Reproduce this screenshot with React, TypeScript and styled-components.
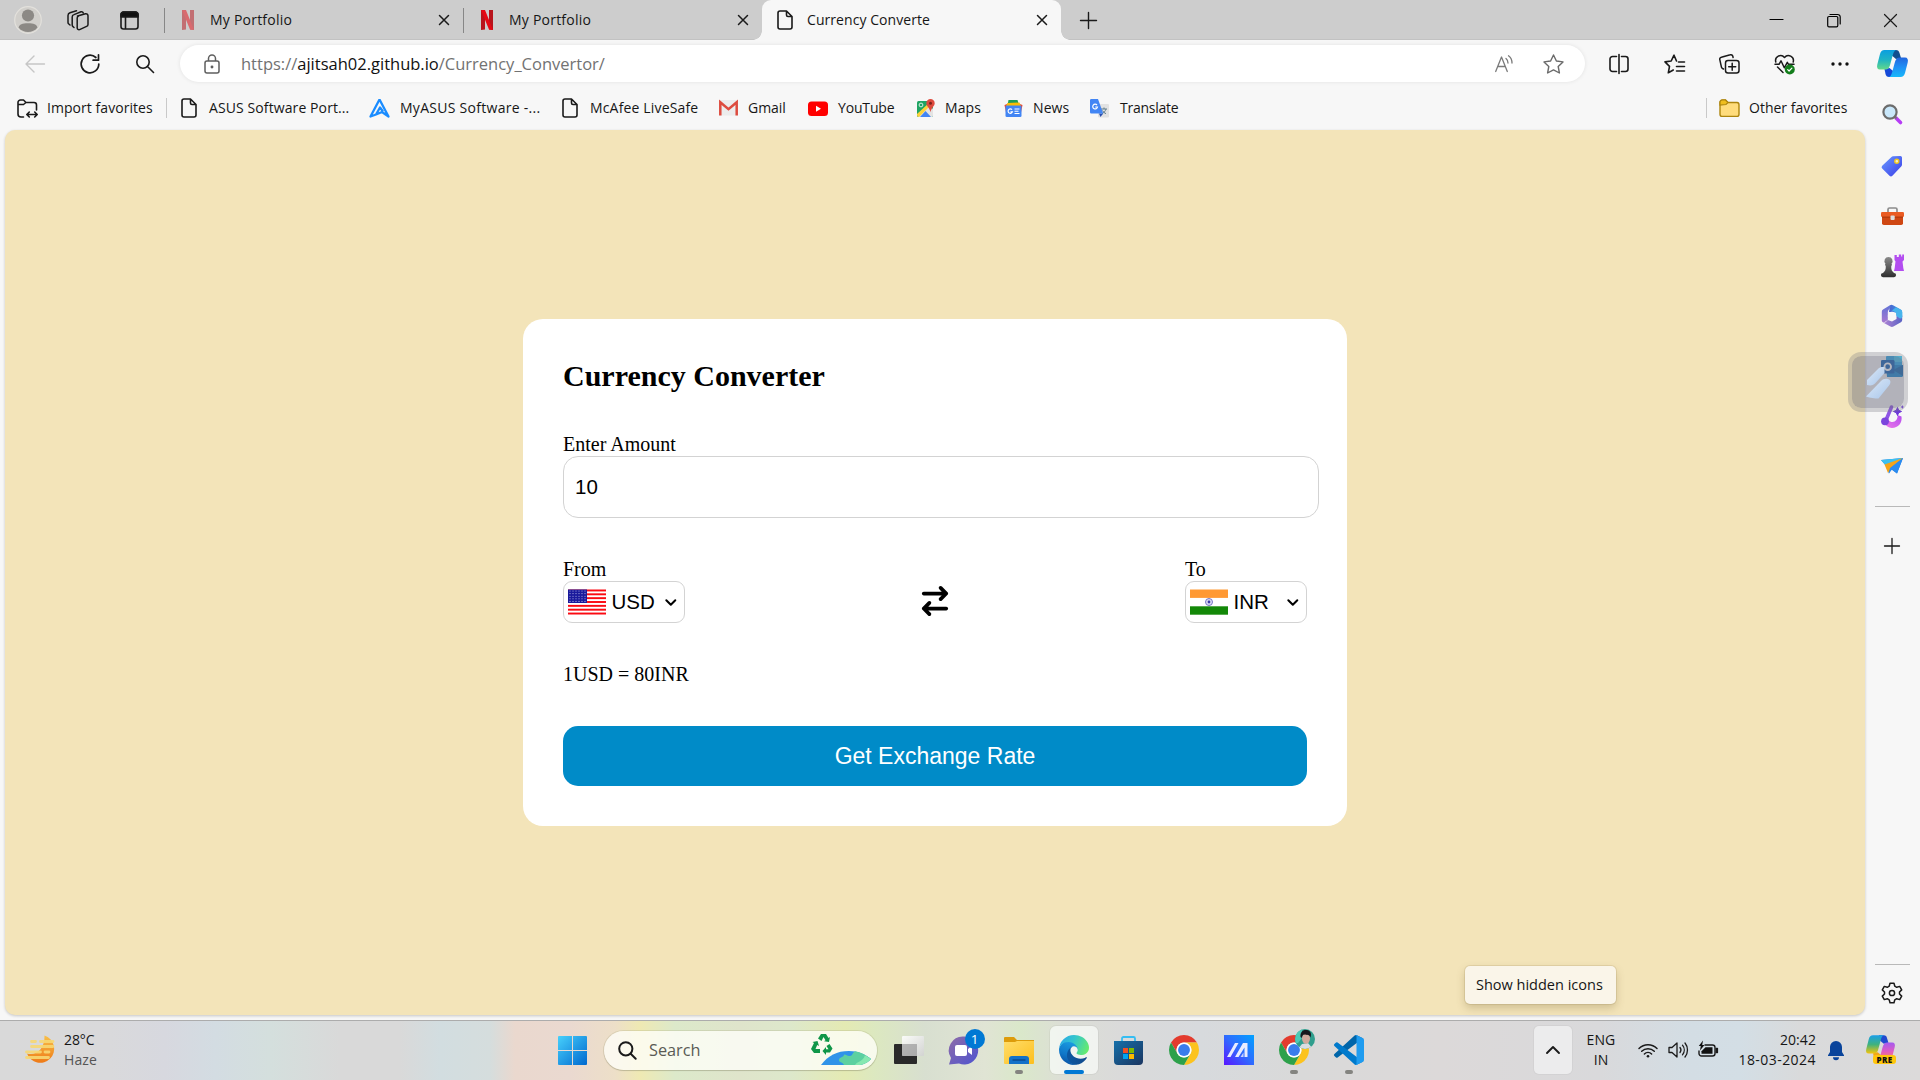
import React from "react";
import styled, { createGlobalStyle } from "styled-components";
import { FaArrowRightArrowLeft } from "react-icons/fa6";

const Global = createGlobalStyle`
  * { box-sizing: border-box; }
  html, body { margin: 0; padding: 0; overflow: hidden; }
  body { font-family: "Open Sans", "Noto Sans", sans-serif; color: #1a1a1a; }
  svg { display: block; flex: none; overflow: visible; }
`;

/* ---------- shared ---------- */

const Screen = styled.div`
  width: 1920px;
  height: 1080px;
  display: flex;
  flex-direction: column;
  background: #f7f7f7;
`;

const Label = styled.span<{ $ls?: number; $size?: number; $color?: string }>`
  font-size: ${(p) => p.$size ?? 14}px;
  letter-spacing: ${(p) => p.$ls ?? 0}px;
  color: ${(p) => p.$color ?? "#161616"};
  white-space: nowrap;
  line-height: 20px;
`;

const Cell = styled.div<{ $w: number; $ml?: number }>`
  width: ${(p) => p.$w}px;
  margin-left: ${(p) => p.$ml ?? 0}px;
  flex: none;
  display: flex;
  align-items: center;
  justify-content: center;
`;

const VLine = styled.i<{ $h: number; $color: string }>`
  width: 1px;
  height: ${(p) => p.$h}px;
  background: ${(p) => p.$color};
  flex: none;
`;

/* ---------- tab strip ---------- */

const TabStrip = styled.header`
  height: 40px;
  display: flex;
  align-items: center;
  background: #cdcdcd;
  box-shadow: inset 0 -1px 0 #c2c2c2;
  padding-left: 14px;
`;

const Tab = styled.div<{ $active?: boolean }>`
  width: 299px;
  height: 40px;
  flex: none;
  display: flex;
  align-items: center;
  padding-right: 13px;
  position: relative;
  background: ${(p) => (p.$active ? "#f7f7f7" : "transparent")};
  border-radius: 9px 9px 0 0;
  ${(p) =>
    p.$active &&
    `
    &::before, &::after {
      content: "";
      position: absolute;
      bottom: 0;
      width: 9px;
      height: 9px;
    }
    &::before { left: -9px; background: radial-gradient(circle at 0 0, transparent 8.5px, #f7f7f7 9px); }
    &::after { right: -9px; background: radial-gradient(circle at 100% 0, transparent 8.5px, #f7f7f7 9px); }
  `}
`;

const TabTitle = styled(Label)`
  margin-left: 12px;
  flex: 1;
`;

const WindowButtons = styled.div`
  margin-left: auto;
  display: flex;
  padding-right: 1px;
`;

/* ---------- toolbar ---------- */

const Toolbar = styled.nav`
  height: 48px;
  display: flex;
  align-items: center;
  padding: 0 0 1px 24px;
`;

const AddressBar = styled.div`
  width: 1405px;
  height: 37px;
  margin-left: 26px;
  border-radius: 19px;
  background: #fff;
  box-shadow: 0 0 4px rgba(0, 0, 0, 0.09);
  display: flex;
  align-items: center;
  padding-left: 21px;
`;

const Url = styled.span`
  margin-left: 19px;
  flex: 1;
  font-size: 16.5px;
  color: #727272;
  white-space: nowrap;
  b { font-weight: 400; color: #111; }
`;

/* ---------- body ---------- */

const Body = styled.div`
  height: 932px;
  display: grid;
  grid-template-columns: 1865px 55px;
`;

const Column = styled.div`
  display: flex;
  flex-direction: column;
  padding-left: 5px;
`;

const Favorites = styled.div`
  height: 42px;
  display: flex;
  align-items: center;
  padding: 0 1px 2px 12px;
`;

const Favorite = styled.div<{ $w: number; $icon: number }>`
  width: ${(p) => p.$w}px;
  flex: none;
  display: grid;
  grid-template-columns: ${(p) => p.$icon}px auto;
  justify-content: start;
  align-items: center;
`;

const Page = styled.main`
  height: 885px;
  background: #f3e4b9;
  border-radius: 10px;
  box-shadow: 0 1px 3px rgba(0, 0, 0, 0.2);
  display: flex;
  align-items: center;
  justify-content: center;
  position: relative;
`;

const Tooltip = styled.div`
  position: absolute;
  left: 1460px;
  top: 836px;
  width: 151px;
  height: 38px;
  border-radius: 5px;
  background: #faf5e9;
  box-shadow: 0 0 0 1px rgba(120, 100, 50, 0.13), 0 4px 8px rgba(100, 80, 30, 0.25);
  display: flex;
  align-items: center;
  padding-left: 11px;
`;

/* ---------- converter card ---------- */

const Card = styled.section`
  width: 824px;
  height: 507px;
  padding: 40px;
  border-radius: 20px;
  background: #fff;
  font-family: "Liberation Serif", serif;
  font-size: 20px;
  line-height: 23px;
  color: #000;
  display: flex;
  flex-direction: column;
  gap: 40px;
`;

const Title = styled.h2`
  margin: 0;
  height: 34px;
  line-height: 34px;
  font-size: 30px;
`;

const Field = styled.label`
  display: flex;
  flex-direction: column;
`;

const AmountBox = styled.div`
  width: 756px;
  height: 62px;
  border: 1px solid #d3d3d3;
  border-radius: 15px;
  padding: 0 11px;
  display: flex;
  align-items: center;
  font: 20.5px "Liberation Sans", sans-serif;
`;

const CurrencyRow = styled.div`
  display: flex;
  justify-content: space-between;
  align-items: flex-end;
`;

const SelectBox = styled.div`
  width: 122px;
  height: 42px;
  border: 1px solid #d3d3d3;
  border-radius: 9px;
  padding: 0 8px 0 4px;
  display: flex;
  align-items: center;
  font: 20.5px "Liberation Sans", sans-serif;
  span { margin-left: 5.5px; flex: 1; }
`;

const Swap = styled.div`
  height: 30px;
  margin-bottom: 7px;
  font-size: 30px;
  display: flex;
  width: 27px;
  justify-content: center;
`;

const Submit = styled.button`
  height: 60px;
  border: 0;
  padding: 0;
  border-radius: 15px;
  background: #008bc8;
  color: #fff;
  font: 23px "Liberation Sans", sans-serif;
`;

/* ---------- sidebar ---------- */

const Sidebar = styled.aside`
  display: flex;
  flex-direction: column;
  align-items: center;
  position: relative;
`;

const SideSlot = styled.div<{ $h: number }>`
  width: 53px;
  height: ${(p) => p.$h}px;
  padding-right: 1px;
  display: flex;
  align-items: center;
  justify-content: center;
`;

const HLine = styled.hr`
  width: 35px;
  height: 1px;
  border: 0;
  margin: 0;
  background: #b9b9b9;
`;

const Spring = styled.div`
  flex: 1;
`;

const Floating = styled.div`
  position: absolute;
  left: -17px;
  top: 264px;
  width: 60px;
  height: 60px;
  border-radius: 13px;
  border: 4px solid rgba(120, 120, 130, 0.3);
  background: rgba(110, 110, 125, 0.5);
  background-clip: padding-box;
  display: flex;
  align-items: center;
  justify-content: center;
  padding-left: 3px;
`;

/* ---------- taskbar ---------- */

const Taskbar = styled.footer`
  height: 60px;
  border-top: 1px solid #acacac;
  padding-bottom: 1px;
  display: flex;
  align-items: center;
  background: linear-gradient(
    90deg,
    #d9d9d9 0, #d9d9db 110px, #d7d8df 165px, #d3dce2 215px, #d4dfdd 270px, #d9d9d9 340px, #d9d9d9 400px,
    #d2dde0 440px, #d5dddd 490px, #ead8ce 515px, #ead9d0 570px, #eddfc8 615px, #efe9b3 640px, #dce9ca 675px,
    #dfe4cb 740px, #dde8cb 790px, #e4eab3 845px, #dce8c0 875px, #d8dfd0 925px, #e0e4d4 985px, #dae8ca 1020px,
    #dcdfd5 1060px, #dadada 1120px, #d7dadd 1200px, #d9d9d9 1300px, #dcd9d9 1440px, #d9d9db 1600px,
    #d3dde4 1690px, #d3dee5 1740px, #d9dadb 1800px, #dcdada 1920px
  );
`;

const Weather = styled.div`
  width: 545px;
  padding-left: 25px;
  display: flex;
  align-items: center;
`;

const Lines = styled.div<{ $ml?: number; $align?: string; $w?: number }>`
  margin-left: ${(p) => p.$ml ?? 0}px;
  width: ${(p) => (p.$w ? p.$w + "px" : "auto")};
  display: flex;
  flex-direction: column;
  align-items: ${(p) => p.$align ?? "flex-start"};
`;

const SearchBox = styled.div`
  width: 273px;
  height: 39px;
  margin: 0 4px;
  border-radius: 20px;
  background: rgba(255, 255, 250, 0.78);
  box-shadow: 0 0 0 1px rgba(150, 150, 110, 0.22), 0 1px 1px rgba(100, 100, 80, 0.25);
  display: flex;
  align-items: center;
  padding-left: 14px;
`;

const AppButton = styled.div<{ $active?: boolean }>`
  width: 48px;
  height: 48px;
  margin: 0 3.5px;
  flex: none;
  border-radius: 6px;
  display: flex;
  align-items: center;
  justify-content: center;
  position: relative;
  background: ${(p) => (p.$active ? "rgba(250,252,250,.72)" : "none")};
  box-shadow: ${(p) => (p.$active ? "0 0 0 1px rgba(0,0,0,.04)" : "none")};
`;

const Running = styled.i<{ $active?: boolean }>`
  position: absolute;
  bottom: 0;
  left: 50%;
  width: ${(p) => (p.$active ? 20 : 8)}px;
  height: 4px;
  margin-left: ${(p) => (p.$active ? -10 : -4)}px;
  border-radius: 2px;
  background: ${(p) => (p.$active ? "#0078d4" : "#848480")};
`;

const Badge = styled.span`
  position: absolute;
  right: 3px;
  top: 3px;
  width: 20px;
  height: 20px;
  border-radius: 50%;
  background: #0078d4;
  color: #fff;
  font-size: 13.5px;
  line-height: 20px;
  text-align: center;
`;

const Tray = styled.div`
  margin-left: auto;
  display: flex;
  align-items: center;
  padding-right: 24px;
`;

const TrayButton = styled.div`
  width: 38px;
  height: 48px;
  border-radius: 5px;
  background: #ececed;
  box-shadow: 0 0 0 1px rgba(0, 0, 0, 0.03);
  display: flex;
  align-items: center;
  justify-content: center;
`;

const CopilotPre = styled.div`
  position: relative;
  width: 30px;
  height: 30px;
  margin-left: 22px;
  span {
    position: absolute;
    left: 7px;
    top: 20px;
    width: 23px;
    height: 9px;
    border-radius: 3px;
    background: #ffc60b;
    color: #111;
    font-size: 8px;
    font-weight: 800;
    line-height: 9px;
    text-align: center;
    letter-spacing: 0.3px;
  }
`;

const FaceBadge = styled.i`
  position: absolute;
  right: 3px;
  top: 3px;
  width: 20px;
  height: 20px;
`;

/* ---------- icons ---------- */

type LineProps = {
  w: number;
  h: number;
  d: string;
  c?: string;
  sw?: number;
  children?: React.ReactNode;
};

const Line = ({ w, h, d, c = "#1a1a1a", sw = 1.4, children }: LineProps) => (
  <svg width={w} height={h} viewBox={`0 0 ${w} ${h}`} fill="none" stroke={c} strokeWidth={sw} strokeLinecap="round" strokeLinejoin="round">
    <path d={d} />
    {children}
  </svg>
);

const Avatar = () => (
  <svg width="28" height="28" viewBox="0 0 28 28">
    <circle cx="14" cy="14" r="13.3" fill="#d1cfcb" stroke="#e3e1dc" strokeWidth="1.2" />
    <circle cx="14" cy="9.5" r="6.1" fill="#8c8985" />
    <path d="M4.5 21.5c1-3.300 3.500-4.300 9.500-4.300s8.500 1 9.500 4.300a12.200 12.200 0 0 1-19 0z" fill="#8c8985" />
  </svg>
);

const Workspaces = () => (
  <Line w={22} h={21} sw={1.5} d="M10.500 6l8-2.200a2 2 0 0 1 2.500 1.900v8.800a2 2 0 0 1-1.400 1.900l-7 3.200a1.800 1.800 0 0 1-2.400-1.600V8a2 2 0 0 1 1.500-2M7 17.500l-1-.8a2 2 0 0 1-.8-1.700V7a2.500 2.500 0 0 1 1.800-2.400L14 1.800c1-.3 1.900.2 2.200 1M3 15l-1.200-1A2 2 0 0 1 1 12.400V5.500a3 3 0 0 1 2-2.800L9.500.8" />
);

const TabActions = () => (
  <Line w={19} h={19} sw={1.6} d="M3.500 1h12A2.500 2.500 0 0 1 18 3.500v12a2.500 2.500 0 0 1-2.500 2.500h-12A2.500 2.500 0 0 1 1 15.500v-12A2.500 2.500 0 0 1 3.500 1zM5.500 6v12">
    <path d="M1 6V3.500A2.500 2.500 0 0 1 3.500 1h12A2.500 2.500 0 0 1 18 3.500V6z" fill="#111" />
  </Line>
);

const Netflix = ({ faded }: { faded?: boolean }) => (
  <svg width="12" height="20" viewBox="0 0 12 20" opacity={faded ? 0.5 : 1}>
    <path d="M0 0h4v19.500L0 20zM8 0h4v20l-4-.5z" fill="#b8141c" />
    <path d="M0 0h4l8 20-4-.5z" fill="#e50914" />
  </svg>
);

const Doc = () => (
  <Line w={16} h={20} sw={1.6} d="M3 1h6.500L15 6.500V17a2 2 0 0 1-2 2H3a2 2 0 0 1-2-2V3a2 2 0 0 1 2-2zM9.500 1v4a1.500 1.500 0 0 0 1.500 1.500h4" />
);

const Cross = ({ s = 10, sw = 1.5 }: { s?: number; sw?: number }) => (
  <Line w={s} h={s} sw={sw} d={`M.5 .5L${s - 0.5} ${s - 0.5}M${s - 0.5} .5L.5 ${s - 0.5}`} />
);

const Copilot = ({ pre }: { pre?: boolean }) => {
  const id = pre ? "cp" : "ct";
  return (
    <svg width={pre ? 29 : 31} height={pre ? 26 : 27} viewBox="0 0 31 27">
      <defs>
        <linearGradient id={id + "a"} x1="0" y1="0" x2="0" y2="1">
          <stop offset="0" stopColor={pre ? "#1a9fe8" : "#0a9ee0"} />
          <stop offset=".5" stopColor={pre ? "#3fb27e" : "#1fb3c4"} />
          <stop offset="1" stopColor={pre ? "#f6c50a" : "#62d989"} />
        </linearGradient>
        <linearGradient id={id + "b"} x1="0" y1="0" x2="0" y2="1">
          <stop offset="0" stopColor={pre ? "#a35af0" : "#2265dd"} />
          <stop offset=".5" stopColor={pre ? "#e05cc2" : "#1e90f5"} />
          <stop offset="1" stopColor={pre ? "#ff8a4c" : "#19b8fa"} />
        </linearGradient>
      </defs>
      <path d="M14 0h5c2 0 3 1 3.500 3l1.500 5-5 1-6-5z" fill={pre ? "#2149cf" : "#12508f"} />
      <path d="M16 27h-4c-2 0-3-1-3.500-3L7.500 19l5-1 6 5z" fill={pre ? "#f3a51a" : "#1549d8"} />
      <path d="M7.500 0H20c-2.500 0-3.400 2-4.200 5l-2.600 9.500c-.8 3-2 5-5.200 5H3C.5 19.500-.5 17.500.3 14.500L3 4C3.800 1.300 5 0 7.500 0z" fill={`url(#${id}a)`} />
      <path d="M23.500 27H11c2.500 0 3.400-2 4.200-5l2.600-9.500c.8-3 2-5 5.200-5h5c2.500 0 3.500 2 2.700 5L28 23c-.8 2.700-2 4-4.500 4z" fill={`url(#${id}b)`} />
    </svg>
  );
};

const Gmail = () => (
  <svg width="19" height="16" viewBox="0 0 19 16">
    <rect x="0" y="0" width="19" height="15.5" rx="1.5" fill="#ececec" />
    <path d="M1.300 15.500V2.200l8.200 7 8.200-7v13.300" fill="none" stroke="#dd4b3e" strokeWidth="2.5" />
  </svg>
);

const YouTube = () => (
  <svg width="20" height="15" viewBox="0 0 20 15">
    <rect y=".5" width="20" height="14.500" rx="3.5" fill="#f00" />
    <path d="M8 4.800v6l5-3z" fill="#fff" />
  </svg>
);

const Maps = () => (
  <svg width="18" height="19" viewBox="0 0 18 19">
    <rect x="0" y="2" width="16" height="16" rx="1.5" fill="#1fa463" />
    <path d="M1 17.500L12 6l4 4v6.500a1.500 1.500 0 0 1-1.500 1.500h-12z" fill="#e4e4e4" />
    <path d="M0 15L13 3l2 2L2 18a2 2 0 0 1-2-2z" fill="#fdd33b" />
    <path d="M3 18l5.500-6 5.500 6z" fill="#4285f4" />
    <circle cx="4" cy="6" r="1.9" fill="none" stroke="#d9f0e2" strokeWidth="1" />
    <path d="M13.500 0a4.200 4.200 0 0 1 4.200 4.200c0 3-3.200 4-4.200 9-1-5-4.200-6-4.200-9A4.200 4.200 0 0 1 13.500 0z" fill="#dd4b3e" />
    <circle cx="13.5" cy="4.2" r="1.5" fill="#7b231c" />
  </svg>
);

const News = () => (
  <svg width="19" height="17" viewBox="0 0 19 17">
    <path d="M4.500 0h9l1.500 5H3.500z" fill="#1e9e58" />
    <path d="M.5 5l4-1.500 1 5-3.500 4zM18.500 5l-4-1.500-1 5 3.500 4z" fill="#ea4335" />
    <path d="M3.500 3l12-.5 1.500 4H2z" fill="#fbbc04" />
    <rect x="1.5" y="5.5" width="16" height="11.5" rx="1.3" fill="#4285f4" />
    <path d="M8 9.700a2.200 2.200 0 1 0 .4 2.200H6.500" stroke="#fff" strokeWidth="1.2" fill="none" />
    <path d="M10.500 9h5M10.500 11.300h4M10.500 13.500h5" stroke="#fff" strokeWidth="1.1" />
  </svg>
);

const Translate = () => (
  <svg width="19" height="19" viewBox="0 0 19 19">
    <rect x="8" y="5" width="11" height="13.5" rx="1.3" fill="#e2e2e2" />
    <path d="M11 10h6M14 8.500V10M16 10c-.5 2-2.500 4-4 5M12.500 11.500c.7 1.500 2 2.600 3.500 3.200" stroke="#607d8b" strokeWidth="1" fill="none" />
    <path d="M9 14.500h4.200L10.500 18z" fill="#2a4fae" />
    <path d="M1.300 0H8l5.200 14.500H1.300A1.300 1.300 0 0 1 0 13.200V1.300A1.300 1.300 0 0 1 1.300 0z" fill="#4285f4" />
    <path d="M7 6a2.400 2.400 0 1 0 .5 2H5.200" stroke="#fff" strokeWidth="1.2" fill="none" />
  </svg>
);

const Asus = () => (
  <svg width="21" height="20" viewBox="0 0 21 20" fill="none" stroke="#1a8cff" strokeWidth="2.3" strokeLinejoin="round">
    <path d="M10.500 1.500L1.500 18.500l5.500-2L11 9.500l3 4M10.500 1.500l9 17-6.500-4.500-6 2.500" />
  </svg>
);

const Folder = () => (
  <svg width="21" height="18" viewBox="0 0 21 18">
    <path d="M1 4a2.500 2.500 0 0 1 2.500-3h3L9 3.500h9A2.200 2.200 0 0 1 20 5.700v9.500a2.200 2.200 0 0 1-2.200 2.200H3.200A2.200 2.200 0 0 1 1 15.200z" fill="#ffdc7c" stroke="#ad850e" strokeWidth="1.4" />
    <path d="M1 6V3.200A2.200 2.200 0 0 1 3.200 1h3.300L9 3.500 7 5.500z" fill="#efbd1d" stroke="#ad850e" strokeWidth="1.2" />
  </svg>
);

const FlagUS = () => (
  <svg width="38" height="26" viewBox="0 0 38 26">
    <rect y=".5" width="38" height="25" fill="#fff" />
    {[0, 1, 2, 3, 4, 5, 6].map((i) => (
      <rect key={i} y={0.5 + i * 3.846} width="38" height="1.923" fill="#fb0a12" />
    ))}
    <rect y=".5" width="19" height="13.5" fill="#1a1a9c" />
    {[0, 1, 2, 3, 4].map((r) =>
      [0, 1, 2, 3, 4, 5].map((c) => <circle key={r + "-" + c} cx={2 + c * 3} cy={2 + r * 2.6} r=".55" fill="#b9b9e8" />)
    )}
  </svg>
);

const FlagIN = () => (
  <svg width="38" height="26" viewBox="0 0 38 26">
    <rect y=".5" width="38" height="25" fill="#fff" />
    <rect y=".5" width="38" height="8.4" fill="#ff9933" />
    <rect y="17.3" width="38" height="8.4" fill="#138808" />
    <circle cx="19" cy="13" r="3.5" fill="#dcdcf4" stroke="#6a6ac0" strokeWidth=".9" />
    <circle cx="19" cy="13" r="1.4" fill="#3a3aa8" />
  </svg>
);

const SideSearch = () => (
  <svg width="21" height="21" viewBox="0 0 21 21">
    <path d="M14 14l4.500 4.500" stroke="#b63df5" strokeWidth="3.6" strokeLinecap="round" />
    <path d="M12 12l2.500 2.500" stroke="#777" strokeWidth="2" />
    <circle cx="8" cy="8" r="6.6" fill="#c9e7fa" stroke="#6c6c6c" strokeWidth="2.2" />
  </svg>
);

const Tag = () => (
  <svg width="22" height="22" viewBox="0 0 22 22">
    <defs>
      <linearGradient id="tag" x1="0" y1="0" x2="1" y2="1">
        <stop offset="0" stopColor="#6a9cff" />
        <stop offset="1" stopColor="#3a3be8" />
      </linearGradient>
    </defs>
    <path d="M12 1.300l7.500-.3A1.700 1.700 0 0 1 21 2.500v7.300a2 2 0 0 1-.6 1.400l-9 9.500a2 2 0 0 1-2.900 0L1.200 13.500a2 2 0 0 1 0-2.800l9.300-8.800a2.500 2.500 0 0 1 1.500-.6z" fill="url(#tag)" />
    <circle cx="15.8" cy="6.2" r="2" fill="#f6f0c8" stroke="#f1c61c" strokeWidth="1.4" />
  </svg>
);

const Toolbox = () => (
  <svg width="23" height="18" viewBox="0 0 23 18">
    <path d="M7 6V2.500A1.500 1.500 0 0 1 8.500 1h6A1.500 1.500 0 0 1 16 2.500V6" fill="none" stroke="#8c8c8c" strokeWidth="1.7" />
    <rect x="1" y="6" width="21" height="12" rx="1.8" fill="#cf4713" />
    <rect x="0" y="5" width="23" height="5" rx="1.3" fill="#ea5b22" />
    <rect x="1" y="9.6" width="21" height="1" fill="#a8360b" />
    <rect x="9.5" y="8.5" width="4.2" height="4.6" rx="1" fill="#ddd" />
  </svg>
);

const Chess = () => (
  <svg width="23" height="24" viewBox="0 0 23 24">
    <defs>
      <linearGradient id="pawn" x1="0" y1="0" x2="0" y2="1">
        <stop offset="0" stopColor="#8a8a8a" />
        <stop offset="1" stopColor="#2f2f2f" />
      </linearGradient>
    </defs>
    <path d="M13.500 1h2.300v2h2V0.500h2.400v2h1V.5H23V6l-1.500 1.500.8 6.500.7 3H13l.7-3 .8-6.500L13.500 6z" fill="#b34df0" />
    <path d="M7.500 3a4 4 0 0 1 3 6.700l.5.800-.8 2c0 3 .5 4.500 2.800 6.500a2.100 2.100 0 0 1 0 4.200H2a2.100 2.100 0 0 1 0-4.200c2.300-2 2.800-3.500 2.800-6.500l-.8-2 .5-.8A4 4 0 0 1 7.500 3z" fill="url(#pawn)" />
  </svg>
);

const M365 = () => (
  <svg width="22" height="24" viewBox="0 0 22 24">
    <defs>
      <linearGradient id="m1" x1="0" y1="0" x2="1" y2="0">
        <stop offset="0" stopColor="#4a62cf" />
        <stop offset="1" stopColor="#3aa4ea" />
      </linearGradient>
      <linearGradient id="m2" x1="0" y1="0" x2="0" y2="1">
        <stop offset="0" stopColor="#6173d6" />
        <stop offset="1" stopColor="#a778d0" />
      </linearGradient>
      <linearGradient id="m3" x1="0" y1="0" x2="1" y2="0">
        <stop offset="0" stopColor="#b184d4" />
        <stop offset="1" stopColor="#5a62c4" />
      </linearGradient>
    </defs>
    <path d="M9 1.200a3 3 0 0 1 3 0l7.800 4.300A2.600 2.600 0 0 1 21.200 8v5L14.500 8.500 8 8z" fill="url(#m1)" />
    <path d="M9 1.200L2 5.500A2.600 2.600 0 0 0 .8 8v8.500c0 1.500 1.500 2.500 3 1.500l3-2V8.500c0-2 1-3 2.500-4.500V1z" fill="url(#m2)" />
    <path d="M21.200 11.500V16a2.600 2.600 0 0 1-1.300 2.300l-7.500 4.300a3 3 0 0 1-3 0L2 18.500c2 .5 3-.5 4.800-2.500l4.200 1.500 4.500-2.500V9z" fill="url(#m3)" />
    <path d="M21.200 8v4.500c0 1.800-1.400 2.500-2.700 1.700L15.300 12l-.3-3.500-4-2 4-3.200 4.800 2.600A2.600 2.600 0 0 1 21.200 8z" fill="#47b4ec" />
    <circle cx="11" cy="12" r="4.2" fill="#f7f7f7" />
  </svg>
);

const Outlook = () => (
  <svg width="22" height="21" viewBox="0 0 22 21">
    <rect x="5" y="0" width="16" height="11" rx="1" fill="#28a8ea" />
    <rect x="13" y="0" width="8" height="6" fill="#45c5ee" />
    <path d="M5 9h17v10.500a1.500 1.500 0 0 1-1.500 1.500H6z" fill="#1487d0" />
    <path d="M22 9v11L12 14z" fill="#1167b0" />
    <rect x="0" y="4" width="13.5" height="13.5" rx="1.3" fill="#0f5fb4" />
    <circle cx="6.7" cy="10.7" r="3.3" fill="none" stroke="#fff" strokeWidth="1.9" />
  </svg>
);

const Designer = () => (
  <svg width="23" height="23" viewBox="0 0 23 23">
    <defs>
      <linearGradient id="des" x1="0" y1="1" x2="1" y2="0">
        <stop offset="0" stopColor="#f07ae8" />
        <stop offset="1" stopColor="#b24cf0" />
      </linearGradient>
    </defs>
    <path d="M2 14c1 5.500 4.500 9 9 9 6 0 10.500-5 9.500-11.500l-4-1.500c.5 4-2 7-5 7-3.500 0-5-2.500-4.500-6z" fill="url(#des)" />
    <path d="M10.500 2L5.500 14" stroke="#8f55e6" strokeWidth="3.6" strokeLinecap="round" />
    <circle cx="4" cy="16.3" r="3.9" fill="#7b45dc" />
    <path d="M16.500 2.500l1.200 2.800L20.500 6.500l-2.800 1.200-1.200 2.800-1.200-2.800L12.500 6.500l2.800-1.200z" fill="#6a35d8" stroke="#6a35d8" />
    <path d="M21.300 0l.6 1.400 1.400.6-1.400.6-.6 1.400-.6-1.400-1.400-.6 1.400-.6z" fill="#6a35d8" />
  </svg>
);

const Plane = () => (
  <svg width="22" height="16" viewBox="0 0 22 16">
    <path d="M0 2L22 0l-6 15.500-5.500-4L8 15.500 6 9z" fill="#2379e0" />
    <path d="M0 2L22 0 5.500 8.500z" fill="#3cc0f0" />
    <path d="M22 0L3.500 6.500 7 15l3-5z" fill="#f5a417" />
    <path d="M22 0L9 10l-1.500 5.500L11 11.500l5 4z" fill="#2a8cf0" />
  </svg>
);

const Gear = () => (
  <Line w={22} h={22} sw={1.5} d="M9 1.200h4l.8 3 1.900 1.100 3-.9 2 3.500-2.200 2.100v2l2.200 2.100-2 3.500-3-.9-1.900 1.100-.8 3H9l-.8-3-1.900-1.100-3 .9-2-3.500L3.500 12v-2L1.300 7.900l2-3.500 3 .9 1.900-1.100z">
    <circle cx="11" cy="11" r="2.6" />
  </Line>
);

const Haze = () => (
  <svg width="30" height="30" viewBox="0 0 30 30">
    <defs>
      <linearGradient id="hz" x1="0" y1="0" x2="0" y2="1">
        <stop offset="0" stopColor="#f8c04a" />
        <stop offset="1" stopColor="#ee7a17" />
      </linearGradient>
    </defs>
    <path d="M19.500.5A14 14 0 1 1 2 18.500c9 2.500 18-4.500 17.500-18z" fill="url(#hz)" />
    <path d="M6.500 6.500h4M15.500 6.500H28M6.500 11.500H28M1.500 17h14M20 17h4M1.500 22.500h22" stroke="#f8d873" strokeWidth="2.8" strokeLinecap="round" opacity=".9" />
  </svg>
);

const Windows = () => (
  <svg width="29" height="29" viewBox="0 0 29 29">
    <defs>
      <linearGradient id="wn" gradientUnits="userSpaceOnUse" x1="0" y1="0" x2="29" y2="29">
        <stop offset="0" stopColor="#47d0fb" />
        <stop offset="1" stopColor="#0068cf" />
      </linearGradient>
    </defs>
    <path d="M1 0h13v14H0V1a1 1 0 0 1 1-1zM15 0h13a1 1 0 0 1 1 1v13H15zM0 15h14v14H1a1 1 0 0 1-1-1zM15 15h14v13a1 1 0 0 1-1 1H15z" fill="url(#wn)" />
  </svg>
);

const EarthArt = () => (
  <svg width="62" height="32" viewBox="0 0 62 32">
    <g fill="#0f9648">
      <path d="M7 4.500L10 0h5l2.500 4 1.500-1-1 5-5-.8 1.500-1L12.500 3l-2 4z" />
      <path d="M18.500 10l3 4.500-2.500 4h-4V21l-3.500-4 3.500-4v2.300h2.500L15.500 12z" />
      <path d="M3 9l-1.500-1L6.500 7 8 12l-1.800-1-1.700 4H9v4H3l-3-4z" />
    </g>
    <path d="M10 31c7-9.500 16-14 28-14 9 0 16 3 22 8-4 4-8 6-14 6z" fill="#2f93e8" />
    <path d="M33 31c-2-4-5-2-5-5s5-2.500 5-5.500c3 0 3 2 6 1.500s2-3 5-4.700c6 1 11 3.700 16 7.700-4 4-8 6-14 6z" fill="#5cd0a0" />
    <path d="M44 31c2-4 8-3 10-9.800L60 25c-4 4-8 6-14 6z" fill="#86e8b0" />
  </svg>
);

const TaskView = () => (
  <svg width="30" height="28" viewBox="0 0 30 28">
    <defs>
      <linearGradient id="tv" x1="0" y1="0" x2="1" y2="1">
        <stop offset="0" stopColor="#fff" />
        <stop offset="1" stopColor="#d2d2d2" />
      </linearGradient>
    </defs>
    <rect x="0" y="8" width="23" height="20" rx="1" fill="#2a2a2a" />
    <rect x="8" y="0" width="22" height="20" rx="1" fill="url(#tv)" opacity=".88" />
    <rect x="8" y="8" width="15" height="12" fill="#9a9a9a" opacity=".6" />
  </svg>
);

const Chat = () => (
  <svg width="29" height="29" viewBox="0 0 29 29">
    <defs>
      <linearGradient id="ch" x1="0" y1="0" x2="1" y2="1">
        <stop offset="0" stopColor="#8f6ca8" />
        <stop offset="1" stopColor="#4e53d0" />
      </linearGradient>
    </defs>
    <path d="M14.500.5a14 14 0 1 1-4.500 27L0 28.500l2-6.500A14 14 0 0 1 14.500.5z" fill="url(#ch)" />
    <rect x="6" y="9" width="12" height="11" rx="2" fill="#fff" />
    <path d="M19 13l4-3v9l-4-3z" fill="#fff" />
  </svg>
);

const Explorer = () => (
  <svg width="30" height="27" viewBox="0 0 30 27">
    <defs>
      <linearGradient id="ex" x1="0" y1="0" x2="1" y2="1">
        <stop offset="0" stopColor="#ffdd6a" />
        <stop offset="1" stopColor="#fdbf1d" />
      </linearGradient>
    </defs>
    <path d="M1 0h9l3 3h17v6H0V1a1 1 0 0 1 1-1z" fill="#dd9c0b" />
    <path d="M0 5h11l2-1h17v22a1 1 0 0 1-1 1H1a1 1 0 0 1-1-1z" fill="url(#ex)" />
    <path d="M5 27v-5a3 3 0 0 1 3-3h14a3 3 0 0 1 3 3v5z" fill="#1272c8" />
    <path d="M9 23h12" stroke="#0a4b90" strokeWidth="1.4" strokeLinecap="round" />
  </svg>
);

const Edge = () => (
  <svg width="30" height="30" viewBox="0 0 256 256">
    <defs>
      <linearGradient id="e1" x1="0" y1="0" x2="1" y2="0">
        <stop offset="0" stopColor="#0c59a4" />
        <stop offset="1" stopColor="#114a8b" />
      </linearGradient>
      <linearGradient id="e2" x1=".6" y1="0" x2=".3" y2="1">
        <stop offset="0" stopColor="#1b9de2" />
        <stop offset=".6" stopColor="#0f76c8" />
        <stop offset="1" stopColor="#0a4fa0" />
      </linearGradient>
      <linearGradient id="e3" x1="0" y1=".3" x2="1" y2=".6">
        <stop offset="0" stopColor="#2aa9e8" />
        <stop offset=".45" stopColor="#34c6cc" />
        <stop offset="1" stopColor="#66eb6e" />
      </linearGradient>
    </defs>
    <path d="M231 190.500c-3.400 1.800-6.900 3.400-10.500 4.700a101.500 101.500 0 0 1-35.600 6.400c-47 0-87.900-32.300-87.900-73.800a31.500 31.500 0 0 1 16.400-27.300c-42.600 1.800-53.500 46.100-53.500 72.100 0 73.500 67.800 81 82.400 81 7.900 0 19.800-2.300 27-4.500l1.300-.5a128.300 128.300 0 0 0 66.600-52.800 4 4 0 0 0-6.200-5.300z" fill="url(#e1)" />
    <path d="M105.700 241.400a79.200 79.200 0 0 1-22.700-21.300 80.700 80.700 0 0 1 29.500-120c3.200-1.500 8.500-4.200 15.600-4a32.400 32.400 0 0 1 25.700 13 31.900 31.900 0 0 1 6.300 18.600c0-.2 24.500-79.600-80-79.600-43.900 0-80 41.600-80 78.200a130.100 130.100 0 0 0 12.100 56 128 128 0 0 0 156.400 67 75.500 75.500 0 0 1-62.900-7.900z" fill="url(#e2)" />
    <path d="M152.300 148.900c-.8 1-3.300 2.500-3.300 5.700 0 2.600 1.700 5.100 4.700 7.200 14.400 10 41.500 8.700 41.600 8.700a59.600 59.600 0 0 0 30.300-8.400 61.400 61.400 0 0 0 30.400-52.900c.3-22.400-8-37.300-11.300-43.900C223.500 23.900 177.700 0 128 0A128 128 0 0 0 0 126.200c.5-36.500 36.800-66 80-66 3.500 0 23.500.3 42 10a72.600 72.600 0 0 1 30.900 29.300c6.100 10.600 7.200 24.100 7.200 29.500s-2.700 13.300-7.800 19.900z" fill="url(#e3)" />
  </svg>
);

const Store = () => (
  <svg width="29" height="29" viewBox="0 0 29 29">
    <defs>
      <linearGradient id="st" x1="0" y1="0" x2="1" y2="1">
        <stop offset="0" stopColor="#1570aa" />
        <stop offset="1" stopColor="#1b3560" />
      </linearGradient>
    </defs>
    <path d="M8 6V2.500A1.500 1.500 0 0 1 9.500 1h10A1.500 1.500 0 0 1 21 2.500V6" fill="none" stroke="#35bdf2" strokeWidth="1.8" />
    <path d="M0 5h29v20a4 4 0 0 1-4 4H4a4 4 0 0 1-4-4z" fill="url(#st)" />
    <path d="M9 12h5v5H9z" fill="#f25022" />
    <path d="M15 12h5v5h-5z" fill="#7fba00" />
    <path d="M9 18h5v5H9z" fill="#00a4ef" />
    <path d="M15 18h5v5h-5z" fill="#ffb900" />
  </svg>
);

const Chrome = () => (
  <svg width="30" height="30" viewBox="0 0 48 48">
    <path d="M24 12h20.780A24 24 0 0 0 3.220 12l10.390 18A11.985 11.985 0 0 1 24 12z" fill="#e33b2e" />
    <path d="M34.390 30L24 48a24 24 0 0 0 20.780-36H24a11.985 11.985 0 0 1 10.390 18z" fill="#fcc31e" />
    <path d="M13.610 30L3.220 12A24 24 0 0 0 24 48l10.390-18a11.985 11.985 0 0 1-20.780 0z" fill="#2da14b" />
    <circle cx="24" cy="24" r="12" fill="#fff" />
    <circle cx="24" cy="24" r="9.5" fill="#3a7cec" />
  </svg>
);

const MyAsus = () => (
  <svg width="30" height="30" viewBox="0 0 30 30">
    <defs>
      <linearGradient id="ma" x1="0" y1="1" x2="1" y2="0">
        <stop offset="0" stopColor="#5a16ff" />
        <stop offset=".5" stopColor="#2f6bff" />
        <stop offset="1" stopColor="#00a2ff" />
      </linearGradient>
    </defs>
    <rect width="30" height="30" fill="url(#ma)" />
    <path d="M3 22L11 8h3.500L6.500 22zM11 22l8-14h4.500v14h-3V12.500L14.500 22z" fill="#e9ecff" />
    <path d="M16.500 22l3-4.500V22z" fill="#c8d2ff" />
  </svg>
);

const Face = () => (
  <svg width="20" height="20" viewBox="0 0 20 20">
    <defs>
      <clipPath id="fc">
        <circle cx="10" cy="10" r="10" />
      </clipPath>
    </defs>
    <g clipPath="url(#fc)">
      <rect width="20" height="20" fill="#2f9e8d" />
      <path d="M0 0h7v9L3 14H0z" fill="#4cc8b6" />
      <path d="M3 20l4-5 6-1 5 6z" fill="#d8dde2" />
      <ellipse cx="11" cy="9.5" rx="4" ry="5.2" fill="#d0a99c" />
      <path d="M5.500 8C5 2 9 .5 12 1s5 3 3.500 7.500C14.500 5.500 12 6 9 5.500 7.500 6 7 7 7 9z" fill="#17181c" />
    </g>
  </svg>
);

const VSCode = () => (
  <svg width="30" height="30" viewBox="0 0 100 100">
    <path d="M96.460 10.800L75.860.880a6.230 6.230 0 0 0-7.110 1.200L1.300 63.580a4.170 4.170 0 0 0 .01 6.160l5.500 5.010a4.160 4.160 0 0 0 5.320.240l81.230-61.620c2.730-2.070 6.640-.130 6.640 3.290v-.240a6.250 6.250 0 0 0-3.540-5.620z" fill="#0065a9" />
    <path d="M96.460 89.200L75.860 99.120a6.230 6.230 0 0 1-7.110-1.200L1.300 36.420a4.170 4.170 0 0 1 .01-6.160l5.500-5.010a4.160 4.160 0 0 1 5.320-.240l81.230 61.620c2.730 2.070 6.640.130 6.640-3.290v.240a6.250 6.250 0 0 1-3.540 5.620z" fill="#007acc" />
    <path d="M75.860 99.130a6.230 6.230 0 0 1-7.110-1.210c2.310 2.310 6.250.670 6.250-2.590V4.670c0-3.260-3.940-4.900-6.250-2.590a6.230 6.230 0 0 1 7.110-1.210l20.600 9.910A6.250 6.250 0 0 1 100 16.410v67.170a6.250 6.250 0 0 1-3.540 5.630z" fill="#1f9cf0" />
  </svg>
);

/* ---------- sections ---------- */

const favorites = [
  { w: 188, icon: 28, ls: 0.1, text: "ASUS Software Port...", art: <Doc /> },
  { w: 193, icon: 31, ls: 0.28, text: "MyASUS Software -...", art: <Asus /> },
  { w: 157, icon: 28, ls: 0.16, text: "McAfee LiveSafe", art: <Doc /> },
  { w: 89, icon: 29, ls: -0.05, text: "Gmail", art: <Gmail /> },
  { w: 109, icon: 30, ls: -0.16, text: "YouTube", art: <YouTube /> },
  { w: 87, icon: 28, ls: 0.1, text: "Maps", art: <Maps /> },
  { w: 86, icon: 29, ls: 0.1, text: "News", art: <News /> },
  { w: 100, icon: 30, ls: -0.25, text: "Translate", art: <Translate /> },
];

const TopTabs = () => (
  <TabStrip>
    <Avatar />
    <Cell $w={22} $ml={25}><Workspaces /></Cell>
    <Cell $w={19} $ml={31}><TabActions /></Cell>
    <Cell $w={25} />
    <Tab>
      <VLine $h={25} $color="#878787" />
      <Cell $w={20} $ml={13}><Netflix faded /></Cell>
      <TabTitle $ls={0.22}>My Portfolio</TabTitle>
      <Cell $w={12}><Cross /></Cell>
    </Tab>
    <Tab>
      <VLine $h={25} $color="#878787" />
      <Cell $w={20} $ml={13}><Netflix /></Cell>
      <TabTitle $ls={0.22}>My Portfolio</TabTitle>
      <Cell $w={12}><Cross /></Cell>
    </Tab>
    <Tab $active>
      <Cell $w={20} $ml={13}><Doc /></Cell>
      <TabTitle $ls={0.06}>Currency Converte</TabTitle>
      <Cell $w={12}><Cross /></Cell>
    </Tab>
    <Cell $w={18} $ml={18}><Line w={17} h={17} sw={1.4} d="M8.500.5v16M.5 8.500h16" /></Cell>
    <WindowButtons>
      <Cell $w={57}><Line w={13} h={2} sw={1.2} d="M0 .5h13" c="#000" /></Cell>
      <Cell $w={57}>
        <Line w={14} h={13} sw={1.2} c="#000" d="M2 2.500h7.500a1.300 1.300 0 0 1 1.300 1.300v7.700a1.300 1.300 0 0 1-1.300 1.300H2a1.300 1.300 0 0 1-1.300-1.300V3.800A1.300 1.300 0 0 1 2 2.500zM3 .5h7.700a2.500 2.500 0 0 1 2.500 2.500v7" />
      </Cell>
      <Cell $w={57}><Cross s={13} sw={1.2} /></Cell>
    </WindowButtons>
  </TabStrip>
);

const NavBar = () => (
  <Toolbar>
    <Cell $w={21}><Line w={20} h={18} c="#c6c6c6" d="M19.500 9H1M9 1L1 9l8 8" /></Cell>
    <Cell $w={20} $ml={35}>
      <Line w={20} h={20} sw={1.7} d="M18.800 10a8.800 8.800 0 1 1-2.900-6.500M18.500.8v5.400h-5.400" />
    </Cell>
    <Cell $w={18} $ml={36}>
      <Line w={18} h={18} sw={1.6} d="M12 12l5.500 5.500"><circle cx="7" cy="7" r="6.2" /></Line>
    </Cell>
    <AddressBar>
      <Cell $w={21}>
        <Line w={16} h={20} c="#5f5f5f" sw={1.5} d="M3 7h10a2 2 0 0 1 2 2v8a2 2 0 0 1-2 2H3a2 2 0 0 1-2-2V9a2 2 0 0 1 2-2zM4.500 7V4.500a3.500 3.500 0 0 1 7 0V7">
          <circle cx="8" cy="13" r=".7" fill="#5f5f5f" />
        </Line>
      </Cell>
      <Url>https://<b>ajitsah02.github.io</b>/Currency_Convertor/</Url>
      <Cell $w={20}>
        <Line w={19} h={17} c="#7a7a7a" sw={1.3} d="M.7 16.500L6.500 2l5.800 14.500M2.800 11.500h7.400M11 3.500c1.500 1.200 2 2.600 2 4.500M13.500 .8c2.300 1.700 3.500 4.200 3.500 7.200" />
      </Cell>
      <Cell $w={22} $ml={28}>
        <Line w={21} h={20} c="#6a6a6a" sw={1.4} d="M10.500 1l2.900 6 6.600.9-4.800 4.600 1.200 6.500-5.900-3.100L4.600 19l1.200-6.500L1 7.900 7.600 7z" />
      </Cell>
      <Cell $w={21} />
    </AddressBar>
    <Cell $w={20} $ml={24}>
      <Line w={20} h={20} sw={1.6} d="M7.500 2.500h-4A2.500 2.500 0 0 0 1 5v10a2.500 2.500 0 0 0 2.500 2.500h4M10 .5v19M12.500 2.500h4A2.500 2.500 0 0 1 19 5v10a2.500 2.500 0 0 1-2.500 2.500h-4" />
    </Cell>
    <Cell $w={21} $ml={35}>
      <Line w={21} h={20} sw={1.6} d="M12.500 7L10 1.200 7.200 7l-6.200.9 4.500 4.500-1.200 6.400 5-2.800M14.500 8h6M12.500 12.500h8M12.500 17h8" />
    </Cell>
    <Cell $w={21} $ml={34}>
      <Line w={21} h={20} sw={1.5} d="M9 6.500h8.500a2.500 2.500 0 0 1 2.500 2.500v7.500a2.500 2.500 0 0 1-2.500 2.500H9a2.500 2.500 0 0 1-2.500-2.500V9A2.500 2.500 0 0 1 9 6.500zM13.200 9.300v7M9.700 12.800h7M4.500 15L3.300 14.300a2 2 0 0 1-.8-1L.8 5.700a2 2 0 0 1 1.500-2.500l9-2.400a2 2 0 0 1 2.500 1.400l.3 1.300" />
    </Cell>
    <Cell $w={21} $ml={34}>
      <Line w={21} h={20} sw={1.5} d="M1.800 8A5 5 0 0 1 10.500 3.500 5 5 0 0 1 19.200 8M1 10.300h4l2-3.500 3.300 7 3-5.500 1.200 2H20M3.500 13l5.500 5.500">
        <circle cx="15.8" cy="15.5" r="5" fill="#137d1b" stroke="none" />
        <path d="M13.700 15.600l1.400 1.400 2.800-2.800" stroke="#fff" strokeWidth="1.2" />
      </Line>
    </Cell>
    <Cell $w={18} $ml={36}>
      <svg width="18" height="4" fill="#111"><circle cx="2" cy="2" r="1.7" /><circle cx="9" cy="2" r="1.7" /><circle cx="16" cy="2" r="1.7" /></svg>
    </Cell>
    <Cell $w={31} $ml={28}><Copilot /></Cell>
  </Toolbar>
);

const FavoritesBar = () => (
  <Favorites>
    <Favorite $w={149} $icon={30}>
      <Line w={21} h={19} sw={1.6} d="M6.500 18H4a3 3 0 0 1-3-3V3.500A2.500 2.500 0 0 1 3.500 1h3L9 3.500h8A2.500 2.500 0 0 1 19.500 6v5M1 5.500h5.500L9 3.500M10 15.500h10M12.300 13L9.800 15.500l2.500 2.500M17.700 13l2.500 2.500-2.500 2.500" />
      <Label $ls={0.05}>Import favorites</Label>
    </Favorite>
    <VLine $h={20} $color="#c9c9c9" />
    <Cell $w={14} />
    {favorites.map((f) => (
      <Favorite key={f.text} $w={f.w} $icon={f.icon}>
        {f.art}
        <Label $ls={f.ls}>{f.text}</Label>
      </Favorite>
    ))}
    <Spring />
    <VLine $h={20} $color="#c9c9c9" />
    <Cell $w={12} />
    <Favorite $w={145} $icon={30}>
      <Folder />
      <Label>Other favorites</Label>
    </Favorite>
  </Favorites>
);

const Chevron = () => <Line w={11} h={7} sw={2} c="#000" d="M1.300 1.300l4.500 4.500 4.500-4.500" />;

const Converter = () => (
  <Card>
    <Title>Currency Converter</Title>
    <Field>
      Enter Amount
      <AmountBox>10</AmountBox>
    </Field>
    <CurrencyRow>
      <Field>
        From
        <SelectBox><FlagUS /><span>USD</span><Chevron /></SelectBox>
      </Field>
      <Swap><FaArrowRightArrowLeft /></Swap>
      <Field>
        To
        <SelectBox><FlagIN /><span>INR</span><Chevron /></SelectBox>
      </Field>
    </CurrencyRow>
    <div>1USD = 80INR</div>
    <Submit>Get Exchange Rate</Submit>
  </Card>
);

const SideRail = () => (
  <Sidebar>
    <SideSlot $h={53}><SideSearch /></SideSlot>
    <SideSlot $h={50}><Tag /></SideSlot>
    <SideSlot $h={50}><Toolbox /></SideSlot>
    <SideSlot $h={50}><Chess /></SideSlot>
    <SideSlot $h={50}><M365 /></SideSlot>
    <SideSlot $h={50}><Outlook /></SideSlot>
    <SideSlot $h={50}><Designer /></SideSlot>
    <SideSlot $h={50}><Plane /></SideSlot>
    <SideSlot $h={15} />
    <HLine />
    <SideSlot $h={78}><Line w={16} h={16} sw={1.3} d="M8 .5v15M.5 8h15" /></SideSlot>
    <Spring />
    <HLine />
    <SideSlot $h={55}><Gear /></SideSlot>
    <Floating>
      <svg width="28" height="36" viewBox="0 0 28 36">
        <defs>
          <linearGradient id="fl" x1="0" y1="0" x2="1" y2="1">
            <stop offset="0" stopColor="#dce9f8" />
            <stop offset="1" stopColor="#a9c6ea" />
          </linearGradient>
        </defs>
        <path d="M1 16L12.500 4.500c1.500-1.500 3-1.500 4-1.500h2v6L9 19.500c-2 2-4.500 2.300-8 1.500z" fill="url(#fl)" />
        <path d="M0 32.500L15 17c2-2 4-2.500 7-2 3 .8 3 4 1 6.500L12.500 34.500c-4 0-8-.5-12.500-2z" fill="url(#fl)" />
      </svg>
    </Floating>
  </Sidebar>
);

const Bar = () => (
  <Taskbar>
    <Weather>
      <Haze />
      <Lines $ml={9}>
        <Label $ls={-0.1}>28°C</Label>
        <Label $color="#555" $ls={0.1}>Haze</Label>
      </Lines>
    </Weather>
    <AppButton><Windows /></AppButton>
    <SearchBox>
      <Line w={19} h={19} sw={2} d="M12.700 12.700l5 5"><circle cx="7.8" cy="7.8" r="6.6" /></Line>
      <Cell $w={12} />
      <Label $size={16.3} $color="#5a5a55">Search</Label>
      <Cell $w={62} $ml={110}><EarthArt /></Cell>
    </SearchBox>
    <AppButton><TaskView /></AppButton>
    <AppButton><Chat /><Badge>1</Badge></AppButton>
    <AppButton><Explorer /><Running /></AppButton>
    <AppButton $active><Edge /><Running $active /></AppButton>
    <AppButton><Store /></AppButton>
    <AppButton><Chrome /></AppButton>
    <AppButton><MyAsus /></AppButton>
    <AppButton><Chrome /><FaceBadge><Face /></FaceBadge><Running /></AppButton>
    <AppButton><VSCode /><Running /></AppButton>
    <Tray>
      <TrayButton><Line w={14} h={8} sw={1.9} d="M1 7l6-6 6 6" /></TrayButton>
      <Lines $ml={14} $w={30} $align="center">
        <Label $ls={0.1}>ENG</Label>
        <Label>IN</Label>
      </Lines>
      <Cell $w={20} $ml={22}>
        <Line w={20} h={15} sw={1.5} d="M1 5.500a12.700 12.700 0 0 1 18 0M3.700 8.300a9 9 0 0 1 12.600 0M6.400 11a5.200 5.200 0 0 1 7.200 0">
          <circle cx="10" cy="13.3" r="1.3" fill="#1a1a1a" stroke="none" />
        </Line>
      </Cell>
      <Cell $w={20} $ml={10}>
        <Line w={20} h={16} sw={1.3} d="M1 5.500h3L9 1v14l-5-4.500H1zM12 5.500c1.200 1.500 1.200 3.500 0 5M14.500 3.200c2.300 2.800 2.300 6.800 0 9.600M17 1c3.300 4 3.300 10 0 14" />
      </Cell>
      <Cell $w={20} $ml={10}>
        <Line w={20} h={16} sw={1.4} d="M7 3h7.500A2.500 2.500 0 0 1 17 5.500v6a2.500 2.500 0 0 1-2.500 2.500h-11A2.500 2.500 0 0 1 1 11.500V9">
          <path d="M7.500 5.300h7v6.500h-11v-2.500z" fill="#111" stroke="none" />
          <path d="M18.200 6.500v4h1.200v-4z" fill="#111" />
          <path d="M5-1.500L.8 4h2L2 8.500 6.500 3H4.200z" fill="#111" stroke="none" />
        </Line>
      </Cell>
      <Lines $w={98} $align="flex-end">
        <Label $ls={0.08}>20:42</Label>
        <Label $ls={0.45}>18-03-2024</Label>
      </Lines>
      <Cell $w={17} $ml={11}>
        <svg width="16" height="19" viewBox="0 0 16 19" fill="#0a449b">
          <path d="M8 0a6 6 0 0 1 6 6v5l2 3.200V15H0v-.8L2 11V6a6 6 0 0 1 6-6zM5 16.300h6a3 3 0 0 1-6 0z" />
        </svg>
      </Cell>
      <CopilotPre><Copilot pre /><span>PRE</span></CopilotPre>
    </Tray>
  </Taskbar>
);

export default function App() {
  return (
    <Screen>
      <Global />
      <TopTabs />
      <NavBar />
      <Body>
        <Column>
          <FavoritesBar />
          <Page>
            <Converter />
            <Tooltip><Label $size={14.5}>Show hidden icons</Label></Tooltip>
          </Page>
        </Column>
        <SideRail />
      </Body>
      <Bar />
    </Screen>
  );
}
